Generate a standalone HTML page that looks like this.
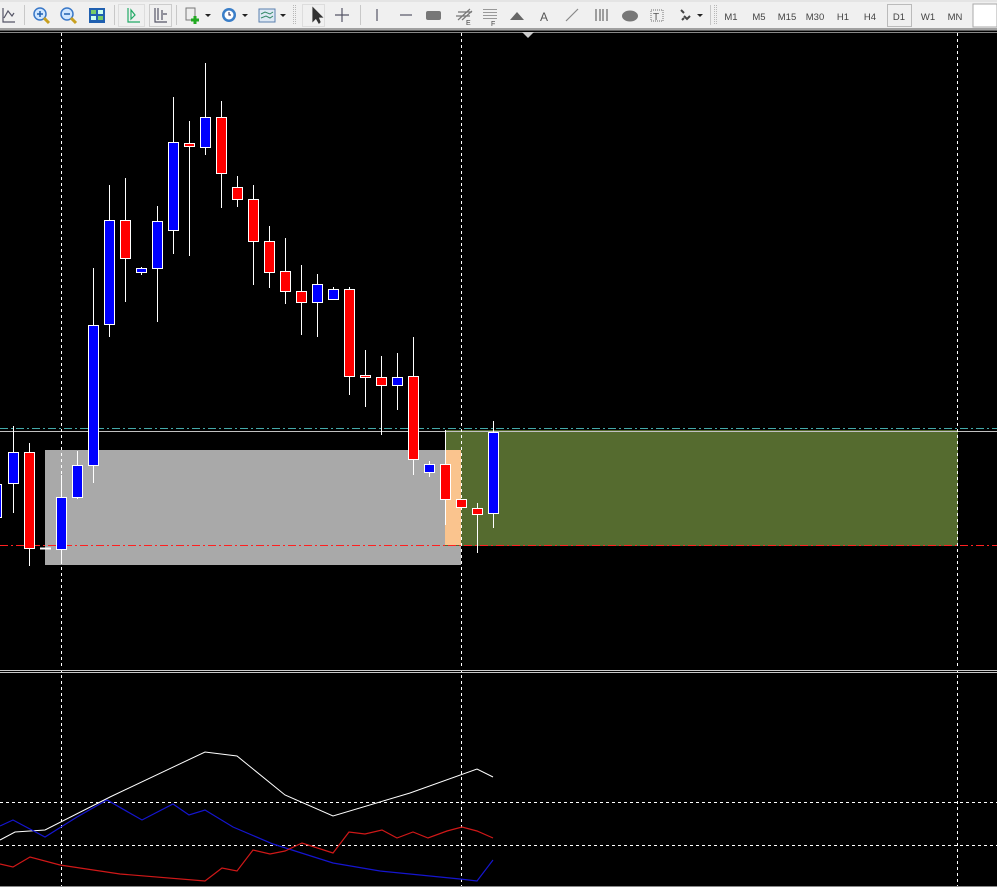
<!DOCTYPE html>
<html><head><meta charset="utf-8"><style>
html,body{margin:0;padding:0;background:#000;width:997px;height:887px;overflow:hidden;font-family:"Liberation Sans",sans-serif}
</style></head><body>
<svg width="997" height="887" viewBox="0 0 997 887" xmlns="http://www.w3.org/2000/svg" style="display:block">
<!-- toolbar -->
<rect x="0" y="0" width="997" height="30" fill="#f0f0f0"/>
<rect x="0" y="0" width="997" height="2" fill="#e4e4e4"/>
<rect x="0" y="28" width="997" height="2" fill="#a0a0a0"/>
<rect x="0" y="30" width="997" height="1" fill="#606060"/>
<g stroke="#c8c8c8" stroke-width="1">
<line x1="24.5" y1="5" x2="24.5" y2="25"/><line x1="114.5" y1="5" x2="114.5" y2="25"/><line x1="176.5" y1="5" x2="176.5" y2="25"/>
<line x1="360.5" y1="5" x2="360.5" y2="25"/><line x1="710.5" y1="5" x2="710.5" y2="25"/>
</g>
<g stroke="#b8b8b8" stroke-dasharray="1 1"><line x1="293.5" y1="5" x2="293.5" y2="25"/><line x1="295.5" y1="5" x2="295.5" y2="25"/><line x1="714.5" y1="5" x2="714.5" y2="25"/><line x1="716.5" y1="5" x2="716.5" y2="25"/></g>
<!-- icons -->
<g fill="none" stroke="#556" stroke-width="1.2">
<path d="M3 8 V22 H15 M4 18 L8 11 L12 16 L14 13"/>
<path d="M128 8 V22 H140 M131 10 V19 L135 15 Z" stroke="#2a6"/>
<path d="M155 8 V22 H167 M158 8 V20 M162 10 V20 M163 14 L167 14" stroke="#556"/>
<path d="M313 8 L313 21 L316 18 L319 23 L320 22 L318 17 L322 17 Z" fill="#333" stroke="#333"/>
<path d="M335 15 H349 M342 8 V22"/>
<path d="M377 9 V21"/><path d="M400 15 H412"/>
<path d="M458 20 L470 9 M462 20 L472 11 M456 16 H470 M458 12 H472" stroke="#777"/>
<path d="M566 21 L578 9" stroke="#888"/>
<path d="M596 9 V21 M600 9 V21 M603 9 V21 M607 9 V21" stroke="#666"/>
<rect x="651" y="10" width="12" height="11" stroke="#888" stroke-dasharray="1 1"/>
</g>
<circle cx="40" cy="14" r="6" fill="#cfe6ff" stroke="#3a78c8" stroke-width="1.5"/><path d="M37 14H43M40 11V17" stroke="#2060b0" stroke-width="1.5"/><path d="M44 18 L49 23" stroke="#c8a020" stroke-width="3"/>
<circle cx="67" cy="14" r="6" fill="#cfe6ff" stroke="#3a78c8" stroke-width="1.5"/><path d="M64 14H70" stroke="#2060b0" stroke-width="1.5"/><path d="M71 18 L76 23" stroke="#c8a020" stroke-width="3"/>
<rect x="89" y="8" width="16" height="15" fill="#2060b0"/><rect x="91" y="10" width="5" height="4" fill="#7c6"/><rect x="98" y="10" width="5" height="4" fill="#cfe"/><rect x="91" y="16" width="5" height="4" fill="#cfe"/><rect x="98" y="16" width="5" height="4" fill="#7c6"/>
<rect x="186" y="8" width="9" height="12" fill="#eee" stroke="#777"/><path d="M195 16 V24 M191 20 H199" stroke="#2a2" stroke-width="3"/><path d="M205 14 l3 3 l3 -3z" fill="#222"/>
<circle cx="229" cy="15" r="7" fill="#3a7ec8"/><circle cx="229" cy="15" r="4.5" fill="#fff"/><path d="M229 12 V15 H231" stroke="#225" fill="none"/><path d="M242 14 l3 3 l3 -3z" fill="#222"/>
<rect x="259" y="9" width="16" height="13" fill="#dde8f4" stroke="#5a7fae"/><path d="M261 14 L265 12 L270 14 L273 12 M261 18 L266 16 L270 18 L273 16" stroke="#386" fill="none"/><path d="M280 14 l3 3 l3 -3z" fill="#222"/>
<rect x="426" y="11" width="15" height="9" rx="2" fill="#777"/>
<g fill="#999"><rect x="483" y="9" width="14" height="1"/><rect x="483" y="12" width="14" height="1"/><rect x="483" y="15" width="14" height="1"/><rect x="483" y="18" width="14" height="1"/></g>
<text x="491" y="26" font-size="7" fill="#444">F</text><text x="466" y="25" font-size="7" fill="#444">E</text>
<path d="M510 20 L517 12 L524 20 Z" fill="#666"/>
<text x="540" y="21" font-size="12" fill="#555">A</text>
<ellipse cx="630" cy="16" rx="8" ry="5.5" fill="#777"/>
<text x="653" y="20" font-size="10" fill="#555">T</text>
<path d="M681 10 l3 3 M684 16 l3 3 l3 -3 M682 20 l2 -2" stroke="#444" stroke-width="2" fill="none"/><path d="M697 14 l3 3 l3 -3z" fill="#222"/>
<g font-size="9.5" fill="#444" text-anchor="middle">
<text x="731" y="20">M1</text><text x="759" y="20">M5</text><text x="787" y="20">M15</text><text x="815" y="20">M30</text><text x="843" y="20">H1</text><text x="870" y="20">H4</text><text x="899" y="20">D1</text><text x="928" y="20">W1</text><text x="955" y="20">MN</text>
</g>
<rect x="887.5" y="4.5" width="24" height="22" fill="none" stroke="#bbb"/>
<rect x="973" y="4" width="24" height="23" fill="#fff" stroke="#aaa"/>
<rect x="149.5" y="4.5" width="22" height="22" fill="none" stroke="#ccc"/>
<rect x="118.5" y="4.5" width="26" height="22" fill="none" stroke="#ddd"/>
<rect x="302.5" y="4.5" width="22" height="22" fill="none" stroke="#ddd"/>
<!-- chart -->
<rect x="0" y="31" width="997" height="856" fill="#000"/>
<line x1="0" y1="32.5" x2="997" y2="32.5" stroke="#888"/>
<path d="M522 32 L534 32 L528 38 Z" fill="#ccc"/>
<rect x="45" y="450" width="416" height="115" fill="#a9a9a9"/>
<rect x="445" y="430" width="513" height="116" fill="#556b2f"/>
<rect x="445" y="450" width="16" height="95" fill="#fac48e"/>
<line x1="0" y1="428.5" x2="997" y2="428.5" stroke="#4aa" stroke-dasharray="8 3 2 3" shape-rendering="crispEdges"/>
<line x1="0" y1="431.5" x2="997" y2="431.5" stroke="#c0c0c0" shape-rendering="crispEdges"/>
<line x1="0" y1="545.5" x2="997" y2="545.5" stroke="#ff2020" stroke-dasharray="8 3 2 3" shape-rendering="crispEdges"/>
<g stroke="#fff" stroke-dasharray="3 3" shape-rendering="crispEdges">
<line x1="61.5" y1="33" x2="61.5" y2="887"/><line x1="461.5" y1="33" x2="461.5" y2="887"/><line x1="957.5" y1="33" x2="957.5" y2="887"/>
<line x1="0" y1="802.5" x2="997" y2="802.5"/><line x1="0" y1="845.5" x2="997" y2="845.5"/>
</g>
<g stroke="#fff" stroke-width="1">
<line x1="13.5" y1="426" x2="13.5" y2="513"/><line x1="29.5" y1="443" x2="29.5" y2="566"/><line x1="61.5" y1="475" x2="61.5" y2="563"/>
<line x1="77.5" y1="451" x2="77.5" y2="499"/><line x1="93.5" y1="268" x2="93.5" y2="483"/><line x1="109.5" y1="185" x2="109.5" y2="337"/>
<line x1="125.5" y1="178" x2="125.5" y2="302"/><line x1="141.5" y1="267" x2="141.5" y2="275"/><line x1="157.5" y1="206" x2="157.5" y2="322"/>
<line x1="173.5" y1="97" x2="173.5" y2="254"/><line x1="189.5" y1="121" x2="189.5" y2="256"/><line x1="205.5" y1="63" x2="205.5" y2="155"/>
<line x1="221.5" y1="101" x2="221.5" y2="208"/><line x1="237.5" y1="176" x2="237.5" y2="207"/><line x1="253.5" y1="185" x2="253.5" y2="285"/>
<line x1="269.5" y1="226" x2="269.5" y2="288"/><line x1="285.5" y1="238" x2="285.5" y2="304"/><line x1="301.5" y1="265" x2="301.5" y2="335"/>
<line x1="317.5" y1="274" x2="317.5" y2="337"/><line x1="333.5" y1="287" x2="333.5" y2="299"/><line x1="349.5" y1="287" x2="349.5" y2="395"/>
<line x1="365.5" y1="350" x2="365.5" y2="407"/><line x1="381.5" y1="356" x2="381.5" y2="435"/><line x1="397.5" y1="353" x2="397.5" y2="410"/>
<line x1="413.5" y1="337" x2="413.5" y2="475"/><line x1="429.5" y1="461" x2="429.5" y2="477"/><line x1="445.5" y1="430" x2="445.5" y2="525"/>
<line x1="477.5" y1="503" x2="477.5" y2="553"/><line x1="493.5" y1="421" x2="493.5" y2="528"/>
<line x1="40" y1="548.5" x2="51" y2="548.5" stroke-width="2"/>
</g>
<g stroke="#fff" stroke-width="1">
<rect x="-3.5" y="484.5" width="5" height="33" fill="#00f"/>
<rect x="8.5" y="452.5" width="10" height="31" fill="#00f"/>
<rect x="24.5" y="452.5" width="10" height="96" fill="#f00"/>
<rect x="56.5" y="497.5" width="10" height="52" fill="#00f"/>
<rect x="72.5" y="465.5" width="10" height="32" fill="#00f"/>
<rect x="88.5" y="325.5" width="10" height="140" fill="#00f"/>
<rect x="104.5" y="220.5" width="10" height="104" fill="#00f"/>
<rect x="120.5" y="220.5" width="10" height="38" fill="#f00"/>
<rect x="136.5" y="268.5" width="10" height="4" fill="#00f"/>
<rect x="152.5" y="221.5" width="10" height="47" fill="#00f"/>
<rect x="168.5" y="142.5" width="10" height="88" fill="#00f"/>
<rect x="184.5" y="143.5" width="10" height="3" fill="#f00"/>
<rect x="200.5" y="117.5" width="10" height="30" fill="#00f"/>
<rect x="216.5" y="117.5" width="10" height="56" fill="#f00"/>
<rect x="232.5" y="187.5" width="10" height="12" fill="#f00"/>
<rect x="248.5" y="199.5" width="10" height="42" fill="#f00"/>
<rect x="264.5" y="241.5" width="10" height="31" fill="#f00"/>
<rect x="280.5" y="271.5" width="10" height="20" fill="#f00"/>
<rect x="296.5" y="291.5" width="10" height="11" fill="#f00"/>
<rect x="312.5" y="284.5" width="10" height="18" fill="#00f"/>
<rect x="328.5" y="289.5" width="10" height="10" fill="#00f"/>
<rect x="344.5" y="289.5" width="10" height="87" fill="#f00"/>
<rect x="360.5" y="375.5" width="10" height="2" fill="#f00"/>
<rect x="376.5" y="377.5" width="10" height="8" fill="#f00"/>
<rect x="392.5" y="377.5" width="10" height="8" fill="#00f"/>
<rect x="408.5" y="376.5" width="10" height="83" fill="#f00"/>
<rect x="424.5" y="464.5" width="10" height="8" fill="#00f"/>
<rect x="440.5" y="464.5" width="10" height="35" fill="#f00"/>
<rect x="456.5" y="499.5" width="10" height="8" fill="#f00"/>
<rect x="472.5" y="508.5" width="10" height="6" fill="#f00"/>
<rect x="488.5" y="432.5" width="10" height="81" fill="#00f"/>
</g>
<rect x="0" y="668" width="997" height="2" fill="#000"/>
<line x1="0" y1="670.5" x2="997" y2="670.5" stroke="#c8c8c8"/>
<line x1="0" y1="672.5" x2="997" y2="672.5" stroke="#c8c8c8"/>
<polyline fill="none" stroke="#fff" stroke-width="1" points="0,840 15,832 45,830 110,797 205,752 237,756 285,795 333,816 410,793 477,769 493,777"/>
<polyline fill="none" stroke="#1515d0" stroke-width="1.2" points="0,826 13,820 45,837 77,817 107,800 142,820 173,804 189,815 205,810 233,827 273,844 333,863 380,871 460,879 477,881 493,860"/>
<polyline fill="none" stroke="#d01818" stroke-width="1.2" points="0,864 13,867 30,857 60,865 120,874 205,881 222,868 237,871 253,850 270,854 285,851 302,843 333,853 349,832 365,834 382,830 397,838 413,832 428,838 447,831 462,827 477,831 493,838"/>
<line x1="0" y1="886.5" x2="997" y2="886.5" stroke="#888"/>
</svg>
</body></html>
